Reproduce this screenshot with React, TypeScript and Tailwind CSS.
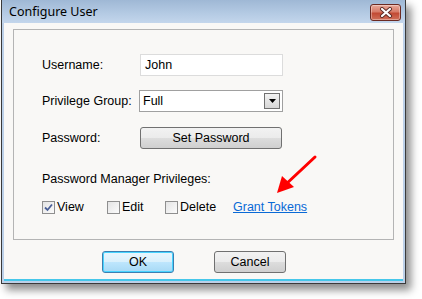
import React from "react";

function CloseButton() {
  return (
    <div className="mt-[4px] mr-[4px] flex h-[17px] w-[31px] items-center justify-center rounded-[3px] border border-[#6b2a22] bg-[linear-gradient(180deg,#e8a99a_0%,#d77b68_45%,#c24a34_55%,#d0705a_100%)] shadow-[inset_0_0_0_1px_rgba(255,255,255,0.35)]">
      <svg width="14" height="11" viewBox="0 0 14 11">
        <path d="M3 2 L11 9 M11 2 L3 9" stroke="#5a2b26" strokeWidth="4" strokeLinecap="round" />
        <path d="M3 2 L11 9 M11 2 L3 9" stroke="#ffffff" strokeWidth="2.2" strokeLinecap="round" />
      </svg>
    </div>
  );
}

function Checkbox({ checked, label }: { checked?: boolean; label: string }) {
  return (
    <label className="flex items-center gap-[2px]">
      <span className="flex h-[13px] w-[13px] items-center justify-center border border-[#8f8f8f] bg-[linear-gradient(135deg,#e4e4e4,#fbfbfb)]">
        {checked && (
          <svg width="9" height="9" viewBox="0 0 9 9">
            <path d="M1 4.5 L3.5 7 L8 1.5" stroke="#4a5f97" strokeWidth="1.8" fill="none" />
          </svg>
        )}
      </span>
      <span>{label}</span>
    </label>
  );
}

export default function App() {
  return (
    <div className="relative h-[299px] w-[422px] overflow-hidden bg-white font-['Liberation_Sans',Arial,sans-serif] text-[12.5px] text-black">
      {/* Window */}
      <div className="ml-[1px] h-[284px] w-[405px] border-x border-b border-[#3a3a3a] bg-[#bcd0e8] shadow-[5px_6px_8px_rgba(0,0,0,0.45)]">
        {/* Title bar */}
        <div className="flex h-[23px] items-start justify-between bg-[linear-gradient(180deg,#9fb8d5_0%,#b5cbe4_60%,#c3d6ec_100%)]">
          <span className="pl-[7px] pt-[4px] font-['Noto_Sans',sans-serif] text-[12.5px] leading-[15px] text-black">Configure User</span>
          <CloseButton />
        </div>

        {/* Client */}
        <div className="mx-[2px] h-[258px] border-b-[2px] border-[#46c7ea] bg-[#f9f8f6] pt-[6px]">
          {/* Group box */}
          <div className="mx-[9px] h-[211px] border border-[#b4b4b4] pl-[28px] pt-[24px]">
            <div className="flex items-center">
              <span className="w-[98px]">Username:</span>
              <div className="flex h-[22px] w-[143px] items-center border border-[#dcdcdc] bg-white px-[4px]">John</div>
            </div>

            <div className="mt-[14px] flex items-center">
              <span className="w-[97px]">Privilege Group:</span>
              <div className="flex h-[22px] w-[144px] items-center justify-between border border-[#a0a0a0] bg-white pl-[3px] pr-[2px]">
                <span>Full</span>
                <span className="flex h-[16px] w-[16px] items-center justify-center border border-[#707070] bg-[linear-gradient(180deg,#f2f2f2,#d6d6d6)]">
                  <svg width="7" height="4" viewBox="0 0 7 4">
                    <path d="M0 0 H7 L3.5 4 Z" fill="#000" />
                  </svg>
                </span>
              </div>
            </div>

            <div className="mt-[15px] flex items-center">
              <span className="w-[98px]">Password:</span>
              <button className="h-[22px] w-[142px] rounded-[3px] border border-[#707070] bg-[linear-gradient(180deg,#f2f2f2_0%,#ebebeb_50%,#dddddd_51%,#cfcfcf_100%)] text-[12.5px]">
                Set Password
              </button>
            </div>

            <div className="mt-[21px]">Password Manager Privileges:</div>

            <div className="mt-[9px] flex items-center">
              <div className="w-[65px]"><Checkbox checked label="View" /></div>
              <div className="w-[58px]"><Checkbox label="Edit" /></div>
              <div className="w-[68px]"><Checkbox label="Delete" /></div>
              <a className="text-[#0a6ad6] underline">Grant Tokens</a>
            </div>
          </div>

          {/* Buttons */}
          <div className="mt-[11px] flex gap-[40px] pl-[98px]">
            <button className="h-[22px] w-[72px] rounded-[3px] border border-[#3c7fb1] bg-[linear-gradient(180deg,#eaf6fd_0%,#d9f0fc_50%,#bee6fd_51%,#a7d9f5_100%)] shadow-[inset_0_0_0_1px_#48d4ff] text-[12.5px]">
              OK
            </button>
            <button className="h-[22px] w-[72px] rounded-[3px] border border-[#707070] bg-[linear-gradient(180deg,#f2f2f2_0%,#ebebeb_50%,#dddddd_51%,#cfcfcf_100%)] text-[12.5px]">
              Cancel
            </button>
          </div>
        </div>
      </div>

      {/* Annotation arrow */}
      <svg className="absolute left-[270px] top-[150px]" width="50" height="50" viewBox="0 0 50 50">
        <path d="M45 7 L14 36" stroke="#ff0000" strokeWidth="3" strokeLinecap="round" />
        <path d="M7 43 L12 26 L24 37 Z" fill="#ff0000" />
      </svg>
    </div>
  );
}
